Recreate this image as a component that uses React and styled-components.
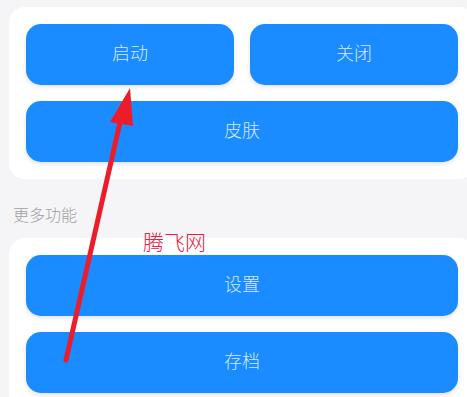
import React from "react";
import styled, { createGlobalStyle } from "styled-components";

const Global = createGlobalStyle`
  html, body { margin: 0; padding: 0; overflow: hidden; background: #f5f5f7; }
  body { font-family: "Noto Sans CJK SC", "Noto Sans", sans-serif; }
`;

const Page = styled.div`
  position: relative;
  width: 484px;
  height: 397px;
  padding: 7px 9px;
  box-sizing: border-box;
  overflow: hidden;
`;

const Card = styled.div`
  background: #ffffff;
  border-radius: 16px;
  padding: 17px;
  display: grid;
  grid-template-columns: ${(p) => (p.$cols === 2 ? "1fr 1fr" : "1fr")};
  gap: 16px;
`;

const Button = styled.button`
  grid-column: ${(p) => (p.$wide ? "1 / -1" : "auto")};
  height: 61px;
  padding: 0 0 5px;
  border: none;
  border-radius: 15px;
  background: #1a8cff;
  color: rgba(255, 255, 255, 0.82);
  font-family: "Noto Sans CJK SC", "Noto Sans", sans-serif;
  font-weight: 300;
  font-size: 18px;
  box-shadow: 0 2px 4px rgba(0, 0, 0, 0.12);
  cursor: pointer;
`;

const SectionLabel = styled.div`
  padding: 25px 0 14px 4px;
  font-size: 16px;
  line-height: 20px;
  font-weight: 300;
  color: #a0a0a0;
`;

const Watermark = styled.div`
  position: absolute;
  left: 143px;
  top: 227px;
  font-size: 21px;
  line-height: 28px;
  font-weight: 300;
  color: #e8213a;
  font-family: "Noto Sans CJK SC", serif;
`;

const Overlay = styled.svg`
  position: absolute;
  left: 0;
  top: 0;
  pointer-events: none;
`;

export default function App() {
  return (
    <>
      <Global />
      <Page>
        <Card $cols={2}>
          <Button>启动</Button>
          <Button>关闭</Button>
          <Button $wide>皮肤</Button>
        </Card>
        <SectionLabel>更多功能</SectionLabel>
        <Card $cols={1}>
          <Button>设置</Button>
          <Button>存档</Button>
        </Card>
        <Watermark>腾飞网</Watermark>
        <Overlay width="467" height="397" viewBox="0 0 467 397">
          <line x1="66" y1="360" x2="121" y2="118" stroke="#ec1c2a" strokeWidth="5" strokeLinecap="round" />
          <polygon points="130,88 110,122 133,126" fill="#ec1c2a" />
        </Overlay>
      </Page>
    </>
  );
}
